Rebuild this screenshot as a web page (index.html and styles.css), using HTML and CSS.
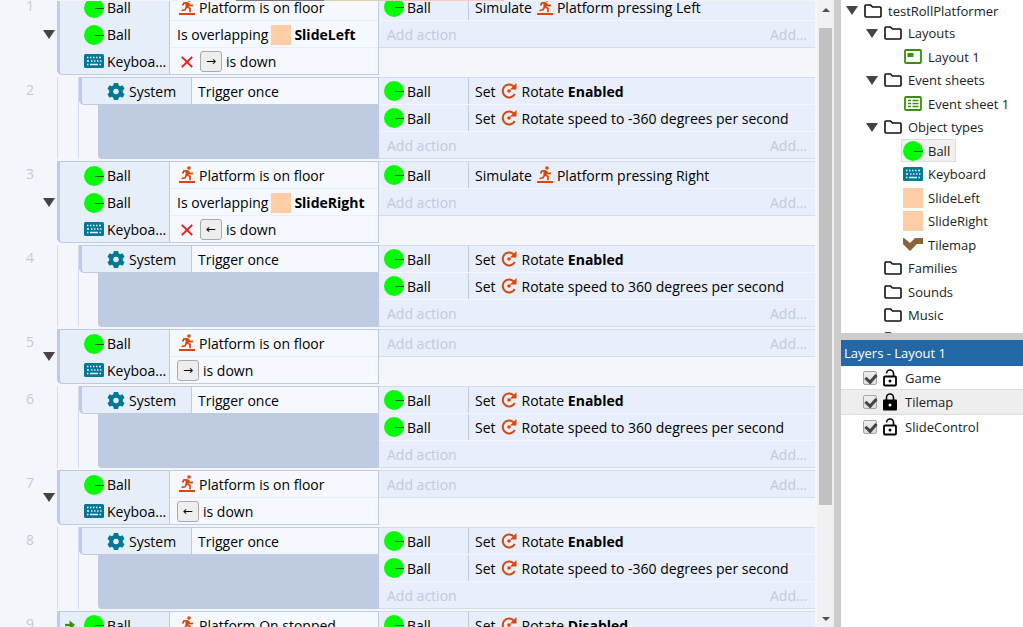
FILE: index.html
```html
<!DOCTYPE html>
<html lang="en">
<head>
    <meta charset="UTF-8">
    <meta name="viewport" content="width=device-width, initial-scale=1.0">
    <title>testRollPlatformer - Event sheet 1</title>
    <link rel="stylesheet" href="styles.css">
</head>
<body>
    <!-- Icons -->
    <svg class="defs">
        <symbol id="ball" viewBox="0 0 20 20">
            <circle cx="10" cy="10" r="10" fill="#00ff00"/>
            <path d="M11 10.5h9" stroke="#155a10"/>
        </symbol>
        <symbol id="keyboard" viewBox="0 0 20 14">
            <rect width="20" height="14" rx="1.5" fill="#007896"/>
            <path d="M3 3.500h1.500M6 3.500h1.500M9 3.500h1.500M12 3.500h1.500M15 3.500h2M3 7h2M7 7h1.500M10 7h1.500M13 7h1.500M16 7h1.500M3 10.500h1.500M6 10.500h8M15.500 10.500H17" stroke="#e6eef9" stroke-width="1.400"/>
        </symbol>
        <symbol id="gear" viewBox="0 0 16 16">
            <path d="M6 0h4l.5 2.200 1.400.8 2.200-.8 1.900 3.300L14.400 7v2l1.600 1.500-1.900 3.300-2.200-.8-1.400.8L10 16H6l-.5-2.200-1.400-.8-2.200.8L0 10.500 1.600 9V7L0 5.500l1.900-3.300 2.200.8 1.400-.8zM8 5.400a2.600 2.600 0 1 0 0 5.200 2.600 2.600 0 0 0 0-5.200z" fill="#007896" fill-rule="evenodd"/>
        </symbol>
        <symbol id="runner" viewBox="0 0 18 18">
            <path d="M1 16h16" stroke="#d8470b" stroke-width="2"/>
            <circle cx="11" cy="2" r="1.800" fill="#d8470b"/>
            <path d="M4.500 7.500L6 4.800l4 .2M8.500 9L7 11.800l-3.500.7M10.300 5.500l1.700 2.200 3-.4M9 8.500l3 2v3.700" fill="none" stroke="#d8470b" stroke-width="1.700"/>
            <path d="M7.500 4.300l3.500.5.500 1.500-1.500 3.200-2.500-.3z" fill="#d8470b"/>
        </symbol>
        <symbol id="rotate" viewBox="0 0 16 16">
            <path d="M12.600 3.400A6.400 6.400 0 1 0 13.800 11" fill="none" stroke="#d8470b" stroke-width="2"/>
            <path d="M15.500 0v6.500H9z" fill="#d8470b"/>
            <circle cx="8" cy="8" r="1.800" fill="#d8470b"/>
        </symbol>
        <symbol id="cross" viewBox="0 0 12 12">
            <path d="M.8.8l10.400 10.400M11.200.8L.8 11.200" stroke="#f11212" stroke-width="1.800"/>
        </symbol>
        <symbol id="folder" viewBox="0 0 18 14">
            <path d="M1 12V2q0-1 1-1h4.500l2 2H16q1 0 1 1v8q0 1-1 1H2q-1 0-1-1z" fill="none" stroke="#111" stroke-width="1.600"/>
        </symbol>
        <symbol id="layout" viewBox="0 0 18 15">
            <rect x="1" y="1" width="16" height="13" rx="1" fill="none" stroke="#3a900b" stroke-width="1.800"/>
            <path d="M3.500 4h6v4h-6z" fill="#3a900b"/>
        </symbol>
        <symbol id="sheet" viewBox="0 0 18 15">
            <rect x="1" y="1" width="16" height="13" rx="1" fill="none" stroke="#3a900b" stroke-width="1.800"/>
            <path d="M4 4.500h3M4 7.500h3M4 10.500h3M8.500 4.500h6M8.500 7.500h6M8.500 10.500h6" stroke="#3a900b" stroke-width="1.500"/>
        </symbol>
        <symbol id="tilemap" viewBox="0 0 20 13">
            <path d="M0 0h1l6 5 5-5h8v6h-6l-7 7L0 6z" fill="#8d6338"/>
        </symbol>
        <symbol id="unlocked" viewBox="0 0 14 18">
            <rect x="1" y="7.500" width="12" height="9" rx="1" fill="none" stroke="#000" stroke-width="1.800"/>
            <path d="M3.500 4.500a3.500 3.500 0 0 1 7 0v3" fill="none" stroke="#000" stroke-width="1.600"/>
            <circle cx="7" cy="12" r="1.500"/>
        </symbol>
        <symbol id="locked" viewBox="0 0 14 18">
            <rect y="6.500" width="14" height="11" rx="1"/>
            <path d="M3.500 7V4.500a3.500 3.500 0 0 1 7 0V7" fill="none" stroke="#000" stroke-width="1.600"/>
            <circle cx="7" cy="12" r="1.500" fill="#fff"/>
        </symbol>
        <symbol id="trigger" viewBox="0 0 12 12">
            <path d="M0 6h6" stroke="#3a900b" stroke-width="2.500"/>
            <path d="M5 1l6 5-6 5z" fill="#3a900b"/>
        </symbol>
        <symbol id="down" viewBox="0 0 12 9">
            <path d="M0 0h12L6 9z" fill="#444"/>
        </symbol>
        <symbol id="key-right" viewBox="0 0 12 8">
            <path d="M0 4h9" stroke="#000" stroke-width="1.200"/>
            <path d="M8 1.500L11.500 4 8 6.500z"/>
        </symbol>
    </svg>

    <div class="app">
        <main class="sheet">
            <div class="events">
                <section class="event">
                    <div class="gutter"><span class="number">1</span><button class="toggle" aria-label="Collapse event 1"><svg><use href="#down"/></svg></button></div>
                    <div class="conditions">
                        <div class="row"><div class="object"><svg class="ball"><use href="#ball"/></svg>Ball</div><div class="text"><svg class="runner"><use href="#runner"/></svg>Platform is on floor</div></div>
                        <div class="row"><div class="object"><svg class="ball"><use href="#ball"/></svg>Ball</div><div class="text">Is overlapping <i class="swatch"></i><b>SlideLeft</b></div></div>
                        <div class="row"><div class="object"><svg class="keyboard"><use href="#keyboard"/></svg>Keyboa...</div><div class="text"><svg class="cross"><use href="#cross"/></svg><kbd>→</kbd>is down</div></div>
                    </div>
                    <div class="actions">
                        <div class="row"><div class="object"><svg class="ball"><use href="#ball"/></svg>Ball</div><div class="text">Simulate <svg class="runner"><use href="#runner"/></svg>Platform pressing Left</div></div>
                        <div class="add"><button>Add action</button><button>Add...</button></div>
                    </div>
                </section>

                <section class="event sub">
                    <div class="gutter"><span class="number">2</span></div>
                    <div class="nest">
                        <div class="conditions">
                            <div class="row"><div class="object"><svg class="gear"><use href="#gear"/></svg>System</div><div class="text">Trigger once</div></div>
                        </div>
                        <div class="filler"></div>
                    </div>
                    <div class="actions">
                        <div class="row"><div class="object"><svg class="ball"><use href="#ball"/></svg>Ball</div><div class="text">Set <svg class="rotate"><use href="#rotate"/></svg><span>Rotate <b>Enabled</b></span></div></div>
                        <div class="row"><div class="object"><svg class="ball"><use href="#ball"/></svg>Ball</div><div class="text">Set <svg class="rotate"><use href="#rotate"/></svg>Rotate speed to -360 degrees per second</div></div>
                        <div class="add"><button>Add action</button><button>Add...</button></div>
                    </div>
                </section>

                <section class="event">
                    <div class="gutter"><span class="number">3</span><button class="toggle" aria-label="Collapse event 3"><svg><use href="#down"/></svg></button></div>
                    <div class="conditions">
                        <div class="row"><div class="object"><svg class="ball"><use href="#ball"/></svg>Ball</div><div class="text"><svg class="runner"><use href="#runner"/></svg>Platform is on floor</div></div>
                        <div class="row"><div class="object"><svg class="ball"><use href="#ball"/></svg>Ball</div><div class="text">Is overlapping <i class="swatch"></i><b>SlideRight</b></div></div>
                        <div class="row"><div class="object"><svg class="keyboard"><use href="#keyboard"/></svg>Keyboa...</div><div class="text"><svg class="cross"><use href="#cross"/></svg><kbd>←</kbd>is down</div></div>
                    </div>
                    <div class="actions">
                        <div class="row"><div class="object"><svg class="ball"><use href="#ball"/></svg>Ball</div><div class="text">Simulate <svg class="runner"><use href="#runner"/></svg>Platform pressing Right</div></div>
                        <div class="add"><button>Add action</button><button>Add...</button></div>
                    </div>
                </section>

                <section class="event sub">
                    <div class="gutter"><span class="number">4</span></div>
                    <div class="nest">
                        <div class="conditions">
                            <div class="row"><div class="object"><svg class="gear"><use href="#gear"/></svg>System</div><div class="text">Trigger once</div></div>
                        </div>
                        <div class="filler"></div>
                    </div>
                    <div class="actions">
                        <div class="row"><div class="object"><svg class="ball"><use href="#ball"/></svg>Ball</div><div class="text">Set <svg class="rotate"><use href="#rotate"/></svg><span>Rotate <b>Enabled</b></span></div></div>
                        <div class="row"><div class="object"><svg class="ball"><use href="#ball"/></svg>Ball</div><div class="text">Set <svg class="rotate"><use href="#rotate"/></svg>Rotate speed to 360 degrees per second</div></div>
                        <div class="add"><button>Add action</button><button>Add...</button></div>
                    </div>
                </section>

                <section class="event">
                    <div class="gutter"><span class="number">5</span><button class="toggle" aria-label="Collapse event 5"><svg><use href="#down"/></svg></button></div>
                    <div class="conditions">
                        <div class="row"><div class="object"><svg class="ball"><use href="#ball"/></svg>Ball</div><div class="text"><svg class="runner"><use href="#runner"/></svg>Platform is on floor</div></div>
                        <div class="row"><div class="object"><svg class="keyboard"><use href="#keyboard"/></svg>Keyboa...</div><div class="text"><kbd>→</kbd>is down</div></div>
                    </div>
                    <div class="actions">
                        <div class="add"><button>Add action</button><button>Add...</button></div>
                    </div>
                </section>

                <section class="event sub">
                    <div class="gutter"><span class="number">6</span></div>
                    <div class="nest">
                        <div class="conditions">
                            <div class="row"><div class="object"><svg class="gear"><use href="#gear"/></svg>System</div><div class="text">Trigger once</div></div>
                        </div>
                        <div class="filler"></div>
                    </div>
                    <div class="actions">
                        <div class="row"><div class="object"><svg class="ball"><use href="#ball"/></svg>Ball</div><div class="text">Set <svg class="rotate"><use href="#rotate"/></svg><span>Rotate <b>Enabled</b></span></div></div>
                        <div class="row"><div class="object"><svg class="ball"><use href="#ball"/></svg>Ball</div><div class="text">Set <svg class="rotate"><use href="#rotate"/></svg>Rotate speed to 360 degrees per second</div></div>
                        <div class="add"><button>Add action</button><button>Add...</button></div>
                    </div>
                </section>

                <section class="event">
                    <div class="gutter"><span class="number">7</span><button class="toggle" aria-label="Collapse event 7"><svg><use href="#down"/></svg></button></div>
                    <div class="conditions">
                        <div class="row"><div class="object"><svg class="ball"><use href="#ball"/></svg>Ball</div><div class="text"><svg class="runner"><use href="#runner"/></svg>Platform is on floor</div></div>
                        <div class="row"><div class="object"><svg class="keyboard"><use href="#keyboard"/></svg>Keyboa...</div><div class="text"><kbd>←</kbd>is down</div></div>
                    </div>
                    <div class="actions">
                        <div class="add"><button>Add action</button><button>Add...</button></div>
                    </div>
                </section>

                <section class="event sub">
                    <div class="gutter"><span class="number">8</span></div>
                    <div class="nest">
                        <div class="conditions">
                            <div class="row"><div class="object"><svg class="gear"><use href="#gear"/></svg>System</div><div class="text">Trigger once</div></div>
                        </div>
                        <div class="filler"></div>
                    </div>
                    <div class="actions">
                        <div class="row"><div class="object"><svg class="ball"><use href="#ball"/></svg>Ball</div><div class="text">Set <svg class="rotate"><use href="#rotate"/></svg><span>Rotate <b>Enabled</b></span></div></div>
                        <div class="row"><div class="object"><svg class="ball"><use href="#ball"/></svg>Ball</div><div class="text">Set <svg class="rotate"><use href="#rotate"/></svg>Rotate speed to -360 degrees per second</div></div>
                        <div class="add"><button>Add action</button><button>Add...</button></div>
                    </div>
                </section>

                <section class="event">
                    <div class="gutter"><span class="number">9</span></div>
                    <div class="conditions">
                        <div class="row"><div class="object triggered"><svg class="trigger"><use href="#trigger"/></svg><svg class="ball"><use href="#ball"/></svg>Ball</div><div class="text"><svg class="runner"><use href="#runner"/></svg>Platform On stopped</div></div>
                    </div>
                    <div class="actions">
                        <div class="row"><div class="object"><svg class="ball"><use href="#ball"/></svg>Ball</div><div class="text">Set <svg class="rotate"><use href="#rotate"/></svg><span>Rotate <b>Disabled</b></span></div></div>
                    </div>
                </section>
            </div>
            <div class="scrollbar">
                <button class="scroll-up" aria-label="Scroll up"></button>
                <div class="track"><div class="thumb"></div></div>
                <button class="scroll-down" aria-label="Scroll down"></button>
            </div>
        </main>

        <aside class="sidebar">
            <ul class="tree">
                <li><svg class="arrow"><use href="#down"/></svg><svg class="folder"><use href="#folder"/></svg>testRollPlatformer</li>
                <li class="level-1"><svg class="arrow"><use href="#down"/></svg><svg class="folder"><use href="#folder"/></svg>Layouts</li>
                <li class="level-2"><span class="item"><svg class="file"><use href="#layout"/></svg>Layout 1</span></li>
                <li class="level-1"><svg class="arrow"><use href="#down"/></svg><svg class="folder"><use href="#folder"/></svg>Event sheets</li>
                <li class="level-2"><span class="item"><svg class="file"><use href="#sheet"/></svg>Event sheet 1</span></li>
                <li class="level-1"><svg class="arrow"><use href="#down"/></svg><svg class="folder"><use href="#folder"/></svg>Object types</li>
                <li class="level-2"><span class="item selected"><svg class="ball"><use href="#ball"/></svg>Ball</span></li>
                <li class="level-2"><span class="item"><svg class="keyboard"><use href="#keyboard"/></svg>Keyboard</span></li>
                <li class="level-2"><span class="item"><i class="swatch"></i>SlideLeft</span></li>
                <li class="level-2"><span class="item"><i class="swatch"></i>SlideRight</span></li>
                <li class="level-2"><span class="item"><svg class="tilemap"><use href="#tilemap"/></svg>Tilemap</span></li>
                <li class="level-1 closed"><svg class="folder"><use href="#folder"/></svg>Families</li>
                <li class="level-1 closed"><svg class="folder"><use href="#folder"/></svg>Sounds</li>
                <li class="level-1 closed"><svg class="folder"><use href="#folder"/></svg>Music</li>
                <li class="level-1 closed"><svg class="folder"><use href="#folder"/></svg></li>
            </ul>
            <div class="layers">
                <h2>Layers - Layout 1</h2>
                <div class="layer"><input type="checkbox" id="game" checked><svg><use href="#unlocked"/></svg><label for="game">Game</label></div>
                <div class="layer active"><input type="checkbox" id="tiles" checked><svg><use href="#locked"/></svg><label for="tiles">Tilemap</label></div>
                <div class="layer"><input type="checkbox" id="slide" checked><svg><use href="#unlocked"/></svg><label for="slide">SlideControl</label></div>
            </div>
        </aside>
    </div>
</body>
</html>
```
FILE: styles.css
```css
* {
    box-sizing: border-box;
}
body {
    margin: 0;
    height: 100vh;
    overflow: hidden;
    background: #f4f6fb;
    color: #000;
    font-family: "Open Sans", sans-serif;
    font-size: 14px;
}
.defs {
    display: none;
}
svg {
    flex: none;
}
button {
    border: 0;
    padding: 0;
    background: none;
    font: inherit;
}
.app {
    display: flex;
    height: 100%;
}

/* event sheet */
.sheet {
    flex: 1;
    min-width: 0;
    display: flex;
    overflow: hidden;
    padding-top: 1px;
    background: linear-gradient(90deg, #f4f2f4 236px, #77757c 236px 324px, #dccfae 324px 400px, #fbc9c9 400px 504px, #f4f2f4 504px) 0 0 / 100% 1px no-repeat;
}
.events {
    flex: 1;
    min-width: 0;
    margin-top: -1px;
    overflow: hidden;
    clip-path: inset(1px 0 0);
}
.event {
    display: grid;
    grid-template-columns: 57px 322px 1fr;
    margin-bottom: 2px;
}
.event:first-child {
    margin-top: -7px;
}
.gutter {
    display: flex;
    justify-content: flex-end;
    padding-right: 2px;
    color: #bfcbe0;
}
.number {
    margin-top: 3px;
    width: 10px;
    text-align: center;
}
.toggle {
    width: 12px;
    margin-left: 8px;
}
.sub .number {
    margin-right: 20px;
}
.event:last-child .number {
    margin-right: 20px;
}
.toggle svg {
    display: block;
    width: 12px;
    height: 9px;
}
.conditions {
    border: 1px solid #bfcbe0;
    border-left-width: 3px;
    border-bottom-left-radius: 5px;
    background: #e6eef9;
}
.nest {
    display: flex;
    flex-direction: column;
    border-left: 1px solid #d3dcec;
    padding-left: 21px;
    background: linear-gradient(#d3dcec, #d3dcec) 20px 0 / 1px 100% no-repeat;
}
.filler {
    flex: 1;
    margin-left: 19px;
    background: #bfcbe0;
    border-bottom-left-radius: 4px;
}
.row {
    display: flex;
    height: 27px;
}
.object {
    display: flex;
    align-items: center;
    gap: 3px;
    width: 110px;
    padding-left: 24px;
    border-right: 1px solid #bfcbe0;
}
.triggered {
    padding-left: 5px;
}
.text {
    flex: 1;
    display: flex;
    align-items: center;
    gap: 3px;
    padding: 1px 0 0 7px;
    white-space: nowrap;
}
.conditions .text {
    background: #f5f9ff;
    border-bottom: 1px solid #e6eef9;
}
.conditions .row:last-child {
    height: 26px;
}
.conditions .row:last-child .text {
    border-bottom: 0;
}
.nest .text {
    padding-left: 6px;
}
.actions {
    align-self: start;
    border: 1px solid #d3dcec;
    border-width: 1px 0;
    background: #e8eefb;
}
.actions .row {
    border-bottom: 1px solid #f4f6fb;
}
.actions .object {
    width: 90px;
    padding-left: 5px;
}
.actions .text {
    padding-left: 6px;
}
.add {
    display: flex;
    justify-content: space-between;
    align-items: center;
    height: 26px;
    padding: 0 8px;
}
.add button {
    color: #bfcbe0;
}
.ball, .swatch {
    width: 20px;
    height: 20px;
}
.swatch {
    flex: none;
    background: #ffcda5;
}
.keyboard {
    width: 20px;
    height: 14px;
}
.gear {
    width: 20px;
    height: 17px;
}
.runner {
    width: 18px;
    height: 18px;
    margin: 0 0 2px 1px;
}
.rotate {
    width: 16px;
    height: 16px;
    margin: 0 2px 2px;
}
.cross {
    width: 12px;
    height: 12px;
    margin: 0 4px;
}
.trigger {
    width: 11px;
    height: 12px;
    margin-right: 5px;
}
kbd {
    width: 22px;
    height: 21px;
    margin-right: 1px;
    border: 1px solid #aaa;
    border-radius: 3px;
    background: #eee;
    font: 12px/18px "DejaVu Sans", sans-serif;
    text-align: center;
}

/* scrollbar */
.scrollbar {
    display: flex;
    flex-direction: column;
    width: 17px;
    margin-left: 2px;
    background: #f1f1f1;
}
.scroll-up, .scroll-down {
    display: flex;
    align-items: center;
    justify-content: center;
    height: 17px;
}
.scroll-up::before, .scroll-down::before {
    content: "";
    border: 4px solid transparent;
}
.scroll-up::before {
    border-top-width: 0;
    border-bottom-color: #505050;
}
.scroll-down::before {
    border-bottom-width: 0;
    border-top-color: #505050;
}
.track {
    flex: 1;
    padding: 10px 2px 0;
}
.thumb {
    height: 82%;
    background: #c1c1c1;
}

/* project and layers */
.sidebar {
    display: flex;
    flex-direction: column;
    width: 189px;
    border-left: 7px solid #ccc;
    background: #fff;
    color: #222;
    font-size: 13px;
}
.tree {
    height: 333px;
    margin: 0;
    padding: 0;
    overflow: hidden;
    list-style: none;
}
.tree li {
    display: flex;
    align-items: center;
    height: 23px;
    padding-left: 5px;
    white-space: nowrap;
}
.tree li:nth-child(even) {
    height: 24px;
}
.tree li:first-child {
    height: 21px;
}
.tree .level-1 {
    padding-left: 25px;
}
.tree .closed {
    padding-left: 43px;
}
.tree .level-2 {
    padding-left: 60px;
}
.arrow {
    width: 12px;
    height: 9px;
    margin-right: 6px;
}
.folder {
    width: 18px;
    height: 14px;
    margin-right: 6px;
}
.item {
    display: flex;
    align-items: center;
    gap: 5px;
    height: 23px;
    padding: 0 5px 0 1px;
    border: 1px solid transparent;
}
.selected {
    border-color: #ddd;
    background: #f0f0f0;
}
.file {
    width: 20px;
    height: 15px;
}
.tilemap {
    width: 20px;
    height: 13px;
}
.layers {
    border-top: 7px solid #ccc;
}
.layers h2 {
    margin: 0;
    padding-left: 3px;
    background: #2268a6;
    color: #fff;
    font-size: 13px;
    font-weight: 400;
    line-height: 26px;
}
.layer {
    display: flex;
    align-items: center;
    height: 23px;
    padding-left: 22px;
}
.layer.active {
    height: 26px;
    border: 1px solid #ddd;
    border-width: 1px 0;
    background: #eee;
}
.layer input {
    appearance: none;
    width: 14px;
    height: 14px;
    margin: 0 6px 0 0;
    border: 1px solid #a5a5a5;
    border-radius: 2px;
    background: linear-gradient(#eee, #ddd);
}
.layer input:checked::before {
    content: "";
    display: block;
    width: 5px;
    height: 8px;
    margin: 0 3px;
    border: solid #444;
    border-width: 0 3px 3px 0;
    transform: rotate(42deg);
}
.layer svg {
    width: 14px;
    height: 18px;
    margin-right: 8px;
}
```
